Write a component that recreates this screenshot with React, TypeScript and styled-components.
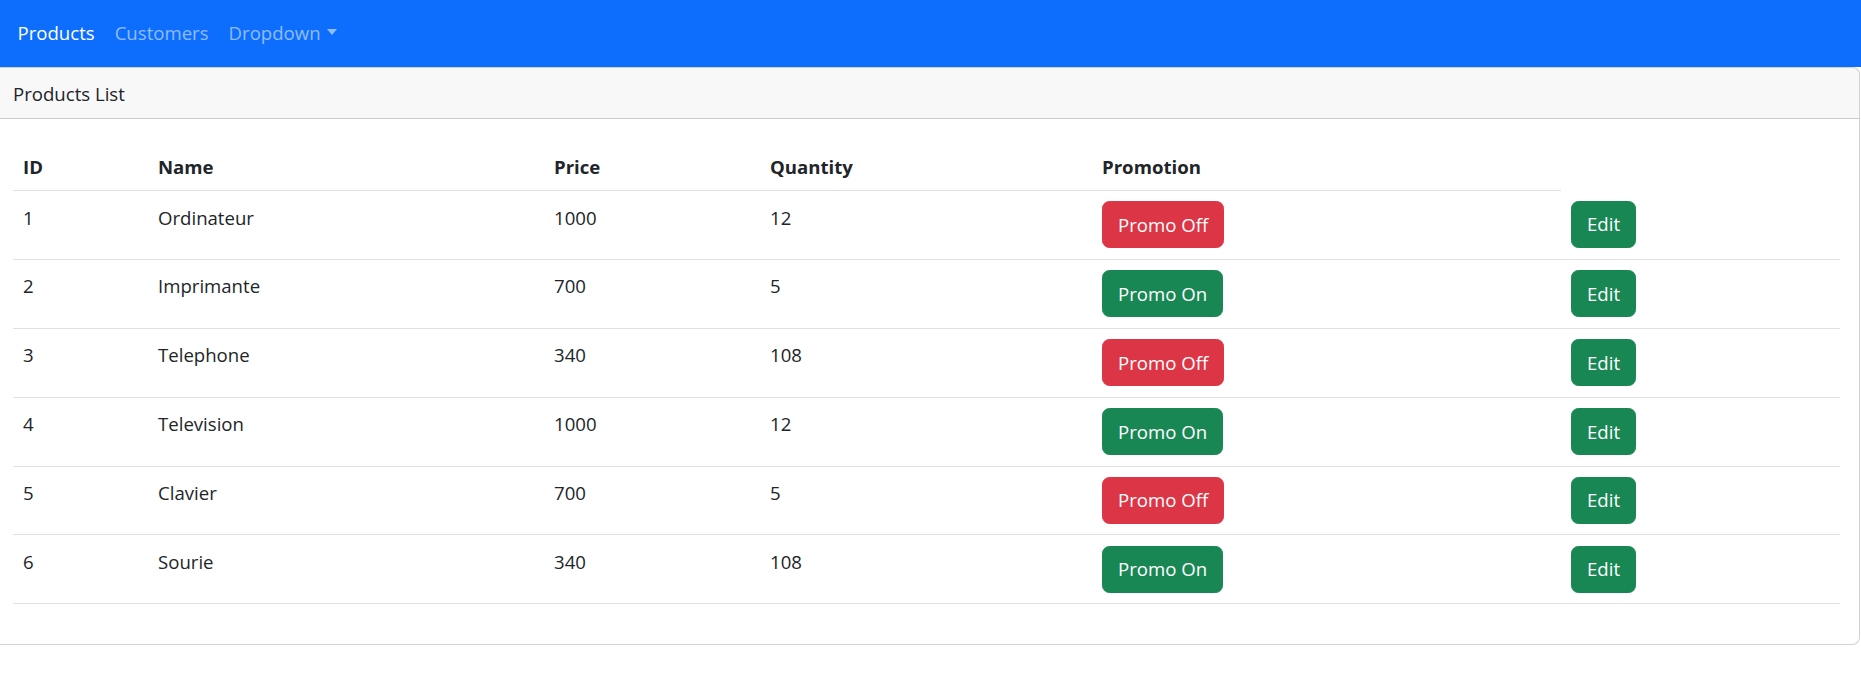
import React from "react";
import styled, { createGlobalStyle } from "styled-components";

const Global = createGlobalStyle`
  *, *::before, *::after { box-sizing: border-box; }
  html, body { margin: 0; padding: 0; background: #fff; overflow: hidden; }
  body {
    font-family: "Open Sans", "Noto Sans", "DejaVu Sans", sans-serif;
    font-size: 18.6px;
    line-height: 30px;
    color: #212529;
  }
`;

const Navbar = styled.nav`
  height: 67px;
  background: #0d6efd;
  display: flex;
  align-items: center;
  padding-left: 7.5px;
  padding-bottom: 2px;
`;

const NavLink = styled.a<{ $active?: boolean }>`
  padding: 0 10px;
  line-height: 30px;
  font-size: 18.6px;
  text-decoration: none;
  color: ${(p) => (p.$active ? "#fff" : "rgba(255,255,255,0.55)")};
  cursor: pointer;
`;

const Caret = styled.span`
  display: inline-block;
  margin-left: 6px;
  vertical-align: 5px;
  border-top: 6px solid;
  border-right: 5.5px solid transparent;
  border-left: 5.5px solid transparent;
`;

const Card = styled.section`
  margin-left: -8px;
  width: calc(100% + 7px);
  border: 1px solid rgba(0, 0, 0, 0.175);
  border-radius: 7.5px;
  background: #fff;
`;

const CardHeader = styled.header`
  padding: 11px 20px 9px;
  line-height: 30px;
  background: rgba(33, 37, 41, 0.03);
  border-bottom: 1px solid rgba(0, 0, 0, 0.175);
  border-radius: 6.5px 6.5px 0 0;
`;

const CardBody = styled.div`
  padding: 20.5px 19px 20px 20px;
`;

const Table = styled.table`
  width: 100%;
  border-collapse: collapse;
  table-layout: fixed;
  margin-bottom: 20px;
  vertical-align: top;
`;

const Col = styled.col<{ $w?: number }>`
  width: ${(p) => (p.$w ? `${p.$w}px` : "auto")};
`;

const Th = styled.th`
  padding: 12px 10px 8.5px;
  text-align: left;
  font-weight: 700;
  line-height: 30px;
  border-bottom: 1px solid #dee2e6;
  vertical-align: top;
`;

const Td = styled.td<{ $text?: boolean }>`
  padding: ${(p) => (p.$text ? "11.5px 10px 8.5px" : "10.45px 10px 10.45px")};
  line-height: 30px;
  border-bottom: 1px solid #dee2e6;
  vertical-align: top;
`;

const Button = styled.button<{ $variant: "danger" | "success" }>`
  display: inline-block;
  font-family: inherit;
  font-size: 18.6px;
  line-height: 30px;
  padding: 7.5px 15px;
  border-radius: 7.5px;
  color: #fff;
  border: 1px solid ${(p) => (p.$variant === "danger" ? "#dc3545" : "#198754")};
  background: ${(p) => (p.$variant === "danger" ? "#dc3545" : "#198754")};
  cursor: pointer;
  vertical-align: top;
`;

type Product = { id: number; name: string; price: number; quantity: number; promotion: boolean };

const products: Product[] = [
  { id: 1, name: "Ordinateur", price: 1000, quantity: 12, promotion: false },
  { id: 2, name: "Imprimante", price: 700, quantity: 5, promotion: true },
  { id: 3, name: "Telephone", price: 340, quantity: 108, promotion: false },
  { id: 4, name: "Television", price: 1000, quantity: 12, promotion: true },
  { id: 5, name: "Clavier", price: 700, quantity: 5, promotion: false },
  { id: 6, name: "Sourie", price: 340, quantity: 108, promotion: true },
];

const widths = [135, 396, 216, 332, 469];

export default function App() {
  return (
    <>
      <Global />
      <Navbar>
        <NavLink $active>Products</NavLink>
        <NavLink>Customers</NavLink>
        <NavLink>
          Dropdown
          <Caret />
        </NavLink>
      </Navbar>
      <Card>
        <CardHeader>Products List</CardHeader>
        <CardBody>
          <Table>
            <colgroup>
              {widths.map((w, i) => (
                <Col key={i} $w={w} />
              ))}
              <Col />
            </colgroup>
            <thead>
              <tr>
                <Th>ID</Th>
                <Th>Name</Th>
                <Th>Price</Th>
                <Th>Quantity</Th>
                <Th>Promotion</Th>
              </tr>
            </thead>
            <tbody>
              {products.map((p) => (
                <tr key={p.id}>
                  <Td $text>{p.id}</Td>
                  <Td $text>{p.name}</Td>
                  <Td $text>{p.price}</Td>
                  <Td $text>{p.quantity}</Td>
                  <Td>
                    <Button $variant={p.promotion ? "success" : "danger"}>
                      {p.promotion ? "Promo On" : "Promo Off"}
                    </Button>
                  </Td>
                  <Td>
                    <Button $variant="success">Edit</Button>
                  </Td>
                </tr>
              ))}
            </tbody>
          </Table>
        </CardBody>
      </Card>
    </>
  );
}
